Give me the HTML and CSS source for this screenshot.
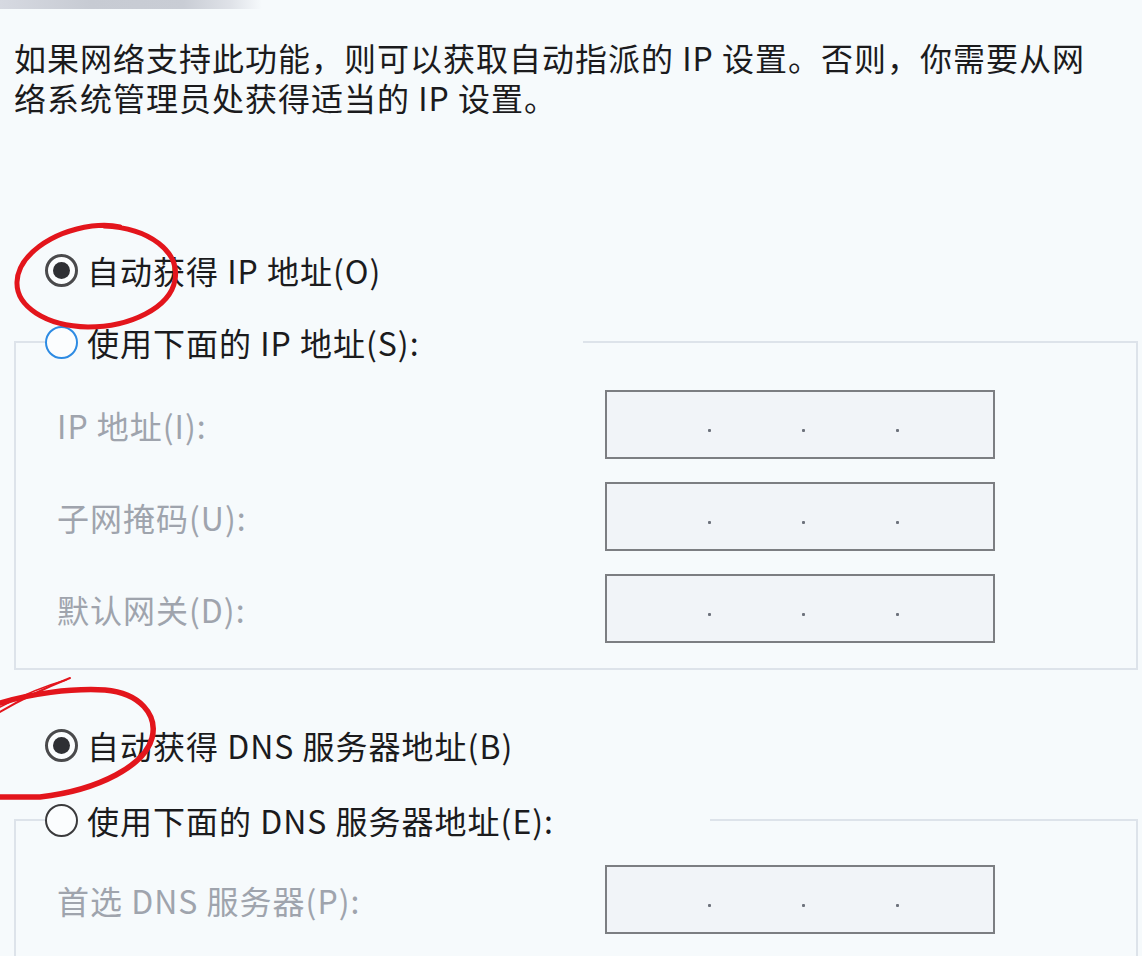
FILE: index.html
```html
<!DOCTYPE html>
<html lang="zh-CN">
<head>
<meta charset="utf-8">
<title>IP 设置</title>
<link rel="stylesheet" href="styles.css">
</head>
<body>
<div class="page">
  <div class="topbar"></div>
  <p class="intro">如果网络支持此功能，则可以获取自动指派的 IP 设置。否则，你需要从网<br>络系统管理员处获得适当的 IP 设置。</p>

  <div class="option option-first"><span class="radio checked"></span><span class="opt-text">自动获得 IP 地址(O)</span></div>

  <fieldset class="group group-ip">
    <legend class="legend legend-ip"><span class="radio focus"></span><span class="opt-text">使用下面的 IP 地址(S):</span></legend>
    <div class="rows rows-ip">
      <div class="row"><span class="lbl">IP 地址(I):</span><div class="ipbox"><i></i><i></i><i></i></div></div>
      <div class="row"><span class="lbl">子网掩码(U):</span><div class="ipbox"><i></i><i></i><i></i></div></div>
      <div class="row"><span class="lbl">默认网关(D):</span><div class="ipbox"><i></i><i></i><i></i></div></div>
    </div>
  </fieldset>

  <div class="option option-dns"><span class="radio checked"></span><span class="opt-text">自动获得 DNS 服务器地址(B)</span></div>

  <fieldset class="group group-dns">
    <legend class="legend legend-dns"><span class="radio plain"></span><span class="opt-text">使用下面的 DNS 服务器地址(E):</span></legend>
    <div class="rows rows-dns">
      <div class="row"><span class="lbl">首选 DNS 服务器(P):</span><div class="ipbox"><i></i><i></i><i></i></div></div>
      <div class="row"><span class="lbl">备用 DNS 服务器(A):</span><div class="ipbox"><i></i><i></i><i></i></div></div>
    </div>
  </fieldset>

  <svg class="marks" width="1142" height="956" viewBox="0 0 1142 956" xmlns="http://www.w3.org/2000/svg">
    <g fill="none" stroke="#e3151c" stroke-linecap="round" stroke-linejoin="round">
      <path stroke-width="5" d="M104 226 C 150 228, 180 252, 175 280 C 170 308, 130 327, 88 327 C 45 326, 16 306, 17 282 C 18 256, 50 232, 92 226 C 100 225, 112 225, 120 227"/>
      <path stroke-width="5.5" d="M0 703 C 30 694, 70 688, 105 690 C 140 693, 158 715, 152 738 C 145 765, 100 790, 40 797 L 0 797"/>
      <path stroke-width="2" d="M0 712 C 20 700, 45 688, 70 678"/>
      <path stroke-width="1.5" d="M0 707 C 25 694, 48 685, 66 680"/>
    </g>
  </svg>
</div>
</body>
</html>
```

FILE: styles.css
```css
html, body {
  margin: 0;
  padding: 0;
}

body {
  background: #f6fafc;
  font-family: "Noto Sans CJK SC", "Noto Sans", sans-serif;
  color: #1b1b1d;
}

.page {
  position: relative;
  width: 1142px;
  height: 956px;
  overflow: hidden;
  display: flex;
  flex-direction: column;
}

.topbar {
  width: 262px;
  height: 9px;
  flex: none;
  background: linear-gradient(90deg, #d6d9e1 0%, #c7cbd3 35%, #c9cdd5 70%, #dfe2e8 88%, rgba(246, 250, 252, 0) 100%);
}

.intro {
  margin: 28px 0 0 0;
  padding-left: 14px;
  font-size: 32px;
  line-height: 40px;
  letter-spacing: 1px;
  white-space: nowrap;
}

.option {
  display: flex;
  align-items: center;
  height: 40px;
  padding-left: 45px;
  font-size: 32px;
  letter-spacing: 1px;
  white-space: nowrap;
}

.option-first {
  margin-top: 133px;
}

.option-dns {
  margin-top: 55px;
}

.opt-text {
  margin-left: 9px;
  line-height: 40px;
}

.radio {
  flex: none;
  box-sizing: border-box;
  width: 33px;
  height: 33px;
  border-radius: 50%;
  display: flex;
  align-items: center;
  justify-content: center;
}

.radio.checked {
  border: 3px solid #4a4a4c;
  background: #fbfdfe;
}

.radio.checked::after {
  content: "";
  width: 17px;
  height: 17px;
  border-radius: 50%;
  background: #2f3034;
}

.radio.focus {
  border: 2.5px solid #2d8be3;
  background: #fbfdfe;
}

.radio.plain {
  border: 2px solid #3a3a3c;
  background: #fbfdfe;
}

.group {
  margin: 0 4px 0 14px;
  padding: 0;
  border: 2px solid #dde3ea;
  min-width: 0;
}

.group-ip {
  margin-top: 32px;
  padding-bottom: 25px;
}

.group-dns {
  margin-top: 35px;
}

.legend {
  display: flex;
  align-items: center;
  height: 40px;
  padding: 0;
  margin-left: 29px;
  font-size: 32px;
  letter-spacing: 1px;
  white-space: nowrap;
}

.legend-ip {
  width: 538px;
}

.legend-dns {
  width: 665px;
}

.rows {
  display: flex;
  flex-direction: column;
  gap: 23px;
}

.rows-ip {
  margin-top: 28px;
}

.rows-dns {
  margin-top: 25px;
}

.row {
  display: flex;
  align-items: center;
  padding-left: 41px;
}

.lbl {
  width: 548px;
  flex: none;
  font-size: 32px;
  letter-spacing: 1px;
  color: #9fa4ad;
  white-space: nowrap;
}

.ipbox {
  box-sizing: border-box;
  width: 390px;
  height: 69px;
  flex: none;
  border: 2px solid #7c7e82;
  background: #f1f4f8;
  display: flex;
  align-items: center;
  gap: 91px;
  padding: 11px 0 0 101px;
}

.ipbox i {
  display: block;
  width: 3px;
  height: 3px;
  border-radius: 1px;
  background: #6d727c;
}

.marks {
  position: absolute;
  left: 0;
  top: 0;
  pointer-events: none;
}
```
